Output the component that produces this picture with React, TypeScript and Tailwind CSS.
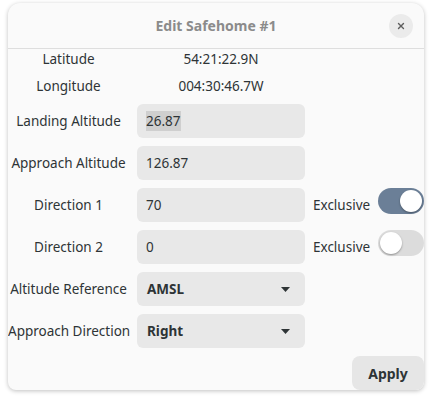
import { Fragment } from "react"
import { X } from "lucide-react"

type Row = { label: string; value: string; exclusive?: boolean; on?: boolean; selected?: boolean }

const entries: Row[] = [
  { label: "Landing Altitude", value: "26.87", selected: true },
  { label: "Approach Altitude", value: "126.87" },
  { label: "Direction 1", value: "70", exclusive: true, on: true },
  { label: "Direction 2", value: "0", exclusive: true, on: false },
]

const combos = [
  { label: "Altitude Reference", value: "AMSL" },
  { label: "Approach Direction", value: "Right" },
]

function Switch({ on }: { on: boolean }) {
  return (
    <div className={`w-[46px] h-[26px] rounded-full p-[2px] flex ${on ? "bg-[#6b7f97] justify-end" : "bg-[#dcdcdc] justify-start"}`}>
      <div className="w-[22px] h-[22px] rounded-full bg-white shadow-[0_1px_2px_rgba(0,0,0,0.35)]" />
    </div>
  )
}

export default function App() {
  return (
    <div className="w-[429px] h-[396px] bg-white pt-[3px] pl-[8px] font-['Noto_Sans',sans-serif] text-[#2e3436]">
      <div className="w-[416px] h-[387px] bg-[#fafafa] rounded-t-[12px] rounded-b-[8px] overflow-hidden shadow-[0_1px_4px_rgba(0,0,0,0.25)] flex flex-col">
        {/* titlebar */}
        <div className="h-[46px] shrink-0 relative flex items-center justify-center border-b border-[#dedede]">
          <span className="text-[14px] font-bold text-[#8b8b8b]">Edit Safehome #1</span>
          <button className="absolute right-[11px] top-[11px] w-[24px] h-[24px] rounded-full bg-[#ebebeb] flex items-center justify-center text-[#5e5e5e]">
            <X size={10} strokeWidth={3.2} />
          </button>
        </div>

        <div className="grid grid-cols-[121px_168px_auto_auto] gap-x-[8px] gap-y-[8px] items-center text-[13.5px] pt-[1px]">
          <div className="h-[19px] flex items-center justify-center">Latitude</div>
          <div className="h-[19px] flex items-center justify-center">54:21:22.9N</div>
          <div />
          <div />
          <div className="h-[19px] flex items-center justify-center">Longitude</div>
          <div className="h-[19px] flex items-center justify-center">004:30:46.7W</div>
          <div />
          <div />

          {entries.map((r) => (
            <Fragment key={r.label}>
              <div className="text-center">{r.label}</div>
              <div className="h-[34px] rounded-[6px] bg-[#e8e8e8] flex items-center px-[9px]">
                <span className={r.selected ? "bg-[#cfcfcf]" : ""}>{r.value}</span>
              </div>
              <div>{r.exclusive ? "Exclusive" : ""}</div>
              <div className="self-start">{r.exclusive && <Switch on={!!r.on} />}</div>
            </Fragment>
          ))}

          {combos.map((c) => (
            <Fragment key={c.label}>
              <div className="text-center whitespace-nowrap">{c.label}</div>
              <div className="h-[34px] rounded-[6px] bg-[#e8e8e8] flex items-center justify-between pl-[10px] pr-[15px] font-bold">
                <span>{c.value}</span>
                <svg width="9" height="5" viewBox="0 0 9 5"><path d="M0 0h9L4.5 5z" fill="#2e3436" /></svg>
              </div>
              <div />
              <div />
            </Fragment>
          ))}
        </div>

        <div className="flex justify-end mt-[8px]">
          <button className="w-[72px] h-[34px] rounded-[8px] bg-[#e6e6e6] text-[14px] font-bold text-[#2e3436]">Apply</button>
        </div>
      </div>
    </div>
  )
}
